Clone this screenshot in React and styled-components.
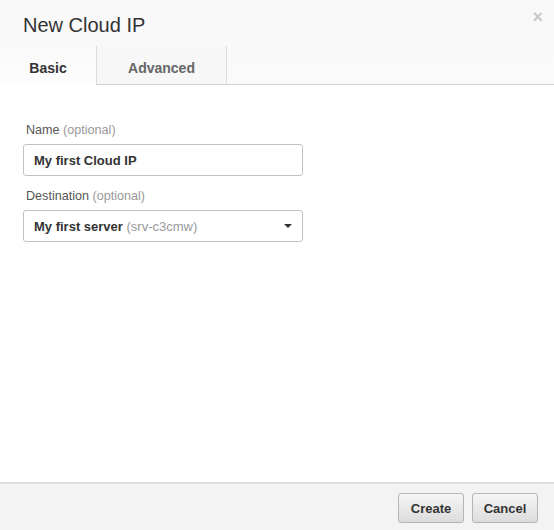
import React from "react";
import styled, { createGlobalStyle } from "styled-components";

const Global = createGlobalStyle`
  html, body { margin: 0; padding: 0; background: #fff; }
  body { font-family: "Liberation Sans", Arial, sans-serif; }
  * { box-sizing: border-box; }
`;

const Dialog = styled.div`
  width: 554px;
  height: 530px;
  display: flex;
  flex-direction: column;
  background: #fff;
`;

const Header = styled.div`
  position: relative;
  background: linear-gradient(#f8f8f8, #fafafa);
  border-bottom: 1px solid #d4d4d4;
  height: 85px;
  display: flex;
  flex-direction: column;
`;

const Title = styled.h3`
  margin: 0;
  padding: 13px 0 0 23px;
  height: 46px;
  font-size: 20px;
  font-weight: normal;
  color: #333;
  line-height: 24px;
`;

const Close = styled.span`
  position: absolute;
  right: 11px;
  top: 7px;
  font-size: 18px;
  font-weight: bold;
  color: #c8c8c8;
  line-height: 20px;
`;

const Tabs = styled.div`
  display: flex;
  flex: 1;
  margin-bottom: -1px;
`;

const Tab = styled.div`
  width: ${(p) => p.$w}px;
  display: flex;
  align-items: center;
  justify-content: center;
  font-size: 14px;
  font-weight: bold;
  color: ${(p) => (p.$active ? "#333" : "#666")};
  background: ${(p) => (p.$active ? "linear-gradient(#fafafa, #fdfdfd)" : "#f7f7f7")};
  border-left: ${(p) => (p.$active ? "none" : "1px solid #dcdcdc")};
  border-right: ${(p) => (p.$active ? "none" : "1px solid #dcdcdc")};
  border-bottom: 1px solid ${(p) => (p.$active ? "#fdfdfd" : "#d4d4d4")};
  padding-top: 5px;
`;

const Body = styled.div`
  flex: 1;
  padding: 38px 23px 0;
  display: flex;
  flex-direction: column;
`;

const Label = styled.div`
  font-size: 12.6px;
  color: #555;
  line-height: 15px;
  margin-bottom: 6px;
  padding-left: 3px;
`;

const Muted = styled.span`
  color: #999;
  font-weight: normal;
`;

const Field = styled.div`
  width: 280px;
  height: 32px;
  border: 1px solid #c2c2c2;
  border-radius: 3px;
  display: flex;
  align-items: center;
  justify-content: space-between;
  padding: 0 10px 0 10px;
  font-size: 13px;
  font-weight: bold;
  color: #333;
  margin-bottom: ${(p) => p.$mb || 0}px;
  background: #fff;
`;

const Caret = styled.span`
  width: 0;
  height: 0;
  border-left: 4px solid transparent;
  border-right: 4px solid transparent;
  border-top: 4px solid #333;
`;

const Footer = styled.div`
  height: 48px;
  border-top: 2px solid #dedede;
  background: #f3f3f3;
  display: flex;
  justify-content: flex-end;
  align-items: flex-start;
  gap: 8px;
  padding: 9px 16px 0 0;
`;

const Button = styled.button`
  width: 66px;
  height: 30px;
  border: 1px solid #b5b5b5;
  border-radius: 3px;
  background: linear-gradient(#f6f6f6, #dcdcdc);
  font-family: "Liberation Sans", Arial, sans-serif;
  font-size: 13px;
  font-weight: bold;
  color: #333;
  padding: 0;
`;

export default function App() {
  return (
    <>
      <Global />
      <Dialog>
        <Header>
          <Title>New Cloud IP</Title>
          <Close>×</Close>
          <Tabs>
            <Tab $active $w={96}>Basic</Tab>
            <Tab $w={131}>Advanced</Tab>
          </Tabs>
        </Header>
        <Body>
          <Label>
            Name <Muted>(optional)</Muted>
          </Label>
          <Field $mb={13}>My first Cloud IP</Field>
          <Label>
            Destination <Muted>(optional)</Muted>
          </Label>
          <Field>
            <span>
              My first server <Muted>(srv-c3cmw)</Muted>
            </span>
            <Caret />
          </Field>
        </Body>
        <Footer>
          <Button>Create</Button>
          <Button>Cancel</Button>
        </Footer>
      </Dialog>
    </>
  );
}
